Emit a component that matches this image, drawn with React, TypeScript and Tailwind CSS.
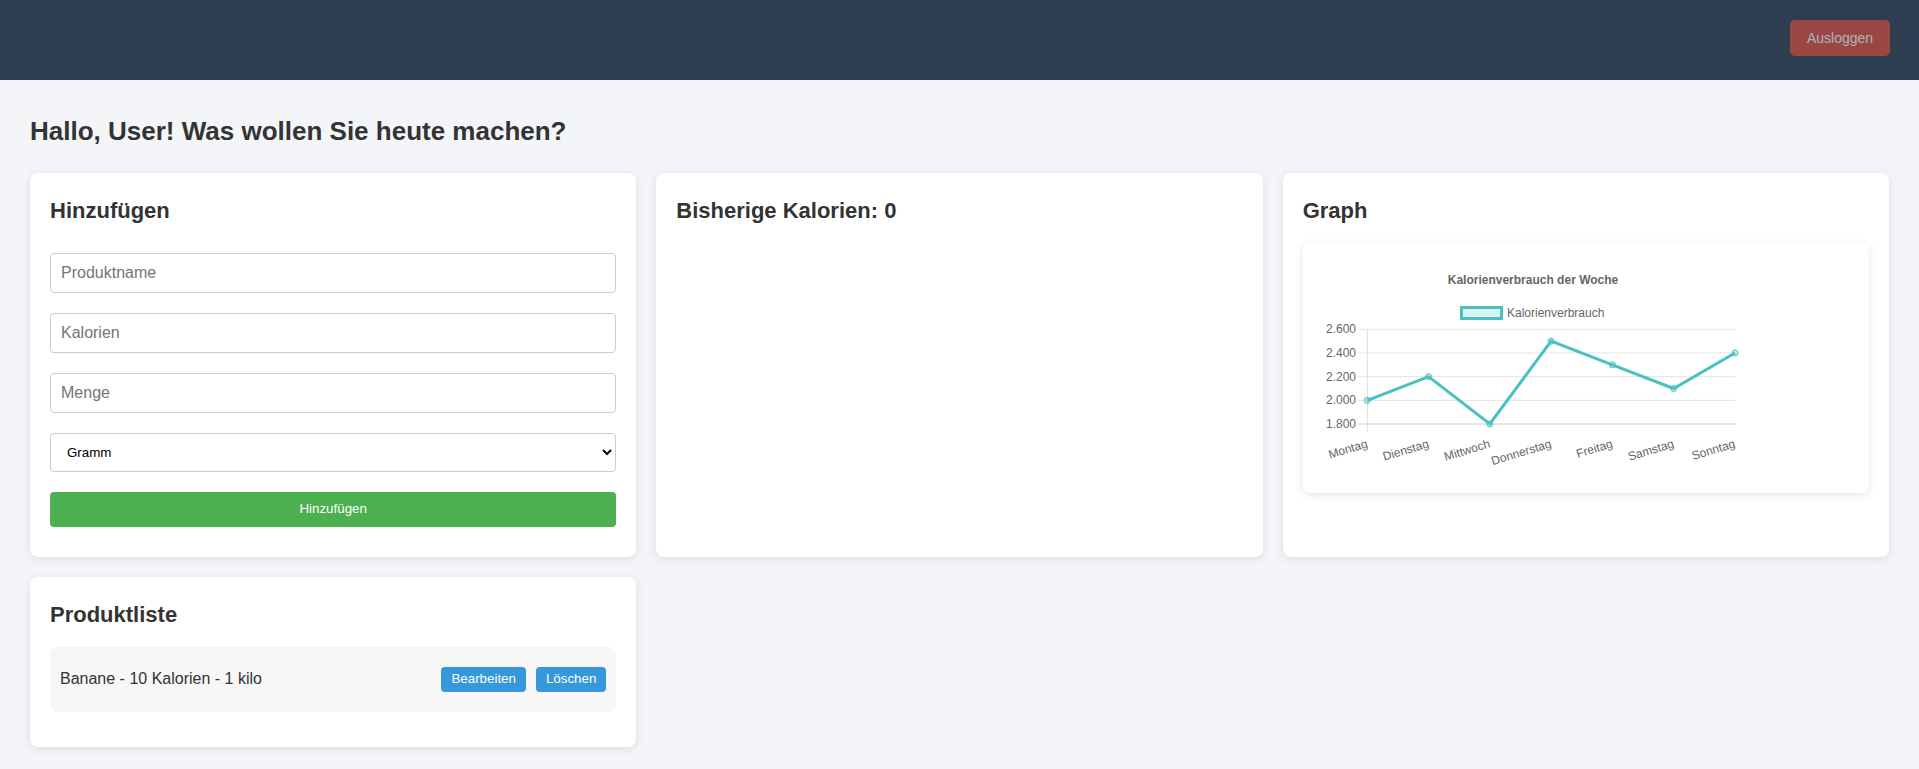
import React from "react";

const days = ["Montag", "Dienstag", "Mittwoch", "Donnerstag", "Freitag", "Samstag", "Sonntag"];
const values = [2000, 2200, 1800, 2500, 2300, 2100, 2400];
const yTicks = [2600, 2400, 2200, 2000, 1800];

const X0 = 64.3;
const DX = 61.28;
const xAt = (i: number) => X0 + DX * i;
const yAt = (v: number) => 181 - (v - 1800) * 0.118375;

function Chart() {
  const pts = values.map((v, i) => `${xAt(i)},${yAt(v)}`).join(" ");
  return (
    <svg width="100%" height="250" className="block">
      <text x={230} y={41} textAnchor="middle" fontSize={12} fontWeight={700} fill="#666" fontFamily="'Liberation Sans', Arial, sans-serif">
        Kalorienverbrauch der Woche
      </text>
      <rect x={158.5} y={64.5} width={40} height={11} fill="rgba(75,192,192,0.2)" stroke="#4bc0c0" strokeWidth={3} />
      <text x={204} y={74} fontSize={12} fill="#666" fontFamily="'Liberation Sans', Arial, sans-serif">
        Kalorienverbrauch
      </text>
      {yTicks.map((t) => (
        <g key={t}>
          <line x1={55} x2={432.5} y1={yAt(t)} y2={yAt(t)} stroke={t === 1800 ? "#cfcfcf" : "#e5e5e5"} strokeWidth={1} />
          <text x={53} y={yAt(t) + 4} textAnchor="end" fontSize={12} fill="#666" fontFamily="'Liberation Sans', Arial, sans-serif">
            {t.toLocaleString("de-DE")}
          </text>
        </g>
      ))}
      <line x1={64.3} x2={64.3} y1={86} y2={189} stroke="#dcdcdc" strokeWidth={1} />
      {days.map((d, i) => (
        <text
          key={d}
          x={xAt(i) + 1}
          y={204}
          textAnchor="end"
          fontSize={12}
          fill="#666"
          fontFamily="'Liberation Sans', Arial, sans-serif"
          transform={`rotate(-17 ${xAt(i) + 1} 204)`}
        >
          {d}
        </text>
      ))}
      <polyline points={pts} fill="none" stroke="#4bc0c0" strokeWidth={3} strokeLinejoin="miter" />
      {values.map((v, i) => (
        <circle key={i} cx={xAt(i)} cy={yAt(v)} r={3} fill="rgba(75,192,192,0.25)" stroke="#4bc0c0" strokeWidth={1} />
      ))}
    </svg>
  );
}

const card = "bg-white rounded-[8px] shadow-[0_2px_10px_rgba(0,0,0,0.1)] px-[20px] pt-[25px]";
const field =
  "h-[40px] w-full border border-[#ccc] rounded-[4px] px-[10px] text-[16px] leading-[18px] text-[#333] bg-white placeholder:text-[#757575] outline-none";

export default function App() {
  return (
    <div className="min-h-screen bg-[#f4f5f9] font-['Liberation_Sans',Arial,sans-serif] text-[#333]">
      <header className="h-[80px] bg-[#2c3e50] flex justify-end items-start pt-[20px] pr-[29px]">
        <button className="h-[36px] w-[100px] rounded-[5px] bg-[#e74c3c] text-white text-[14px] opacity-60">
          Ausloggen
        </button>
      </header>
      <main className="px-[30px] pt-[36px] pb-[20px]">
        <h1 className="text-[26px] font-bold leading-[30px] text-[#333]">Hallo, User! Was wollen Sie heute machen?</h1>
        <div className="mt-[27px] grid grid-cols-3 gap-[20px]">
          <div className={`${card} pb-[30px]`}>
            <h2 className="text-[22px] font-bold leading-[25px]">Hinzufügen</h2>
            <div className="mt-[30px] flex flex-col gap-[20px]">
              <input className={field} placeholder="Produktname" />
              <input className={field} placeholder="Kalorien" />
              <input className={field} placeholder="Menge" />
              <select
                className="h-[38.5px] w-full border border-[#ccc] rounded-[4px] pl-[12px] pr-[4px] text-[13.33px] text-black bg-white outline-none"
                defaultValue="Gramm"
              >
                <option>Gramm</option>
                <option>Kilo</option>
                <option>Stück</option>
              </select>
              <button className="h-[35px] w-full bg-[#4caf50] text-white text-[13.33px] rounded-[4px]">Hinzufügen</button>
            </div>
          </div>
          <div className={`${card}`}>
            <h2 className="text-[22px] font-bold leading-[25px]">Bisherige Kalorien: 0</h2>
          </div>
          <div className={`${card}`}>
            <h2 className="text-[22px] font-bold leading-[25px]">Graph</h2>
            <div className="mt-[20px] h-[250px] bg-white rounded-[8px] shadow-[0_2px_10px_rgba(0,0,0,0.1)]">
              <Chart />
            </div>
          </div>
          <div className={`${card} pb-[35px]`}>
            <h2 className="text-[22px] font-bold leading-[25px]">Produktliste</h2>
            <div className="mt-[20px] h-[65px] px-[10px] bg-[#f7f7f7] rounded-[8px] flex items-center justify-between">
              <span className="text-[16px] text-[#333]">Banane - 10 Kalorien - 1 kilo</span>
              <div className="flex gap-[10px]">
                <button className="h-[25px] px-[10px] bg-[#3498db] text-white text-[13.33px] rounded-[4px]">Bearbeiten</button>
                <button className="h-[25px] px-[10px] bg-[#3498db] text-white text-[13.33px] rounded-[4px]">Löschen</button>
              </div>
            </div>
          </div>
        </div>
      </main>
    </div>
  );
}
